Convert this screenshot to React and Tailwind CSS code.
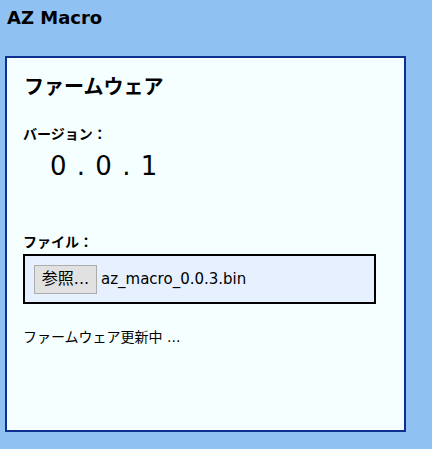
import React from 'react';

const jp = { fontFamily: '"DejaVu Sans", "Noto Sans CJK JP", sans-serif' };

function FirmwarePanel() {
  return (
    <div className="w-[401px] h-[376px] ml-[5px] mt-[26px] border-2 border-[#0c318f] bg-[#f5ffff] flex flex-col">
      <h2 className="mt-[18px] pl-[17px] text-[20px] leading-[22px] font-bold text-black">ファームウェア</h2>

      <div className="mt-[28px] pl-[16px] text-[14px] leading-[16px] font-bold text-black">バージョン：</div>
      <div className="mt-[9px] pl-[43px] text-[26px] leading-[30px] tracking-[1px] text-black">0 . 0 . 1</div>

      <div className="mt-[53px] pl-[16px] text-[14px] leading-[16px] font-bold text-black">ファイル：</div>
      <div className="mt-[4px] ml-[16px] w-[353px] h-[50px] border-2 border-black bg-[#e6f0ff] flex items-center pl-[9px]">
        <button className="w-[63px] h-[29px] border border-[#adadad] bg-[#e1e1e1] text-[16px] leading-[20px] text-black">
          参照...
        </button>
        <span className="ml-[4px] text-[15px] text-black">az_macro_0.0.3.bin</span>
      </div>

      <div className="mt-[25px] pl-[16px] text-[14px] leading-[16px] text-black">ファームウェア更新中 ...</div>
    </div>
  );
}

export default function App() {
  return (
    <div className="w-[432px] h-[449px] bg-[#8fc1f3] overflow-hidden" style={jp}>
      <h1 className="pt-[6px] pl-[7px] text-[18px] leading-[24px] font-bold text-black">AZ Macro</h1>
      <FirmwarePanel />
    </div>
  );
}
